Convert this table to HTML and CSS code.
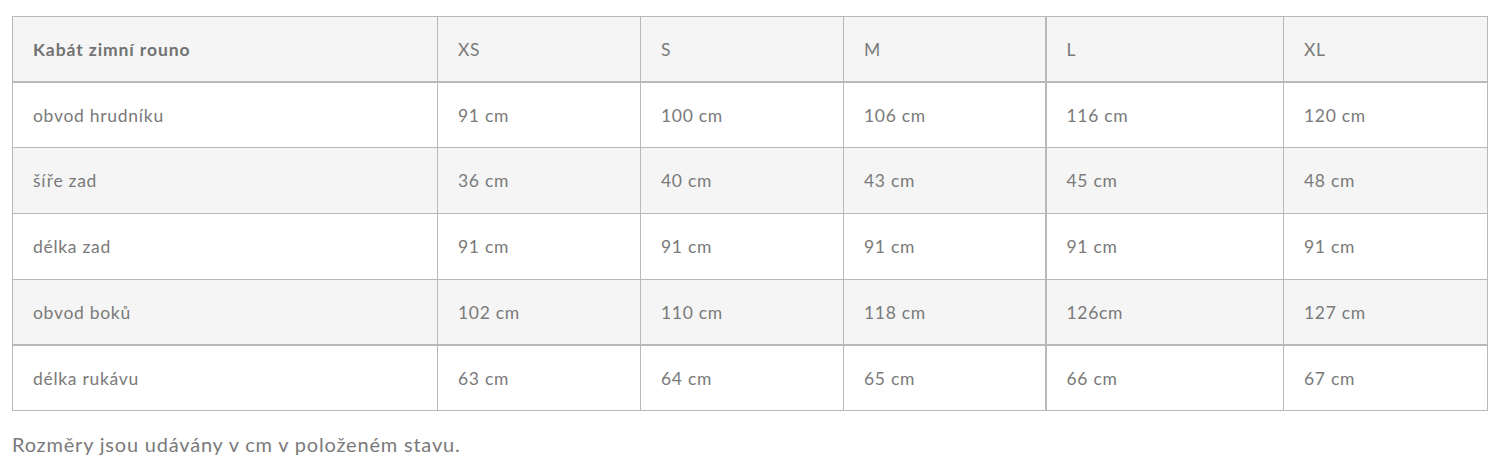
FILE: index.html
```html
<!DOCTYPE html>
<html lang="cs">
<head>
<meta charset="utf-8">
<link rel="stylesheet" href="styles.css">
</head>
<body>
<div class="wrap">
  <table class="sizes">
    <colgroup>
      <col class="c-name"><col class="c-xs"><col class="c-s"><col class="c-m"><col class="c-l"><col class="c-xl">
    </colgroup>
    <thead>
      <tr class="head">
        <th class="title">Kabát zimní rouno</th>
        <th>XS</th><th>S</th><th>M</th><th class="col-l">L</th><th>XL</th>
      </tr>
    </thead>
    <tbody>
      <tr><td>obvod hrudníku</td><td>91 cm</td><td>100 cm</td><td>106 cm</td><td class="col-l">116 cm</td><td>120 cm</td></tr>
      <tr class="alt"><td>šíře zad</td><td>36 cm</td><td>40 cm</td><td>43 cm</td><td class="col-l">45 cm</td><td>48 cm</td></tr>
      <tr><td>délka zad</td><td>91 cm</td><td>91 cm</td><td>91 cm</td><td class="col-l">91 cm</td><td>91 cm</td></tr>
      <tr class="alt thick"><td>obvod boků</td><td>102 cm</td><td>110 cm</td><td>118 cm</td><td class="col-l">126cm</td><td>127 cm</td></tr>
      <tr class="last"><td>délka rukávu</td><td>63 cm</td><td>64 cm</td><td>65 cm</td><td class="col-l">66 cm</td><td>67 cm</td></tr>
    </tbody>
  </table>
  <p class="note">Rozměry jsou udávány v cm v položeném stavu.</p>
</div>
</body>
</html>
```

FILE: styles.css
```css
html, body {
  margin: 0;
  padding: 0;
  background: #ffffff;
}
.wrap {
  padding: 16px 13px 0 12px;
  font-family: "Lato", "Noto Sans", sans-serif;
  color: #7a7a7a;
}
.sizes {
  width: 1475px;
  border-collapse: collapse;
  table-layout: fixed;
  font-size: 17.5px;
  letter-spacing: 0.7px;
}
.c-name { width: 425px; }
.c-xs { width: 203px; }
.c-s { width: 203px; }
.c-m { width: 202px; }
.c-l { width: 238px; }
.c-xl { width: 204px; }
.sizes th, .sizes td {
  border: 1px solid #b9b9b9;
  padding: 0 20px;
  height: 64px;
  text-align: left;
  vertical-align: middle;
  font-weight: 400;
}
.sizes tbody tr + tr td {
  height: 65px;
}
.sizes tbody tr.thick td,
.sizes tbody tr.last td {
  height: 64px;
}
.head th {
  background: #f5f5f5;
  border-bottom: 2px solid #b9b9b9;
}
.head th.title {
  font-weight: 700;
  color: #727272;
  letter-spacing: 0.9px;
}
.alt td {
  background: #f5f5f5;
}
.thick td {
  border-bottom: 2px solid #b9b9b9;
}
.sizes .col-l {
  border-left: 2px solid #b9b9b9;
}
.note {
  margin: 21px 0 0 0;
  font-size: 20px;
  line-height: 24px;
  letter-spacing: 0.8px;
}
```
